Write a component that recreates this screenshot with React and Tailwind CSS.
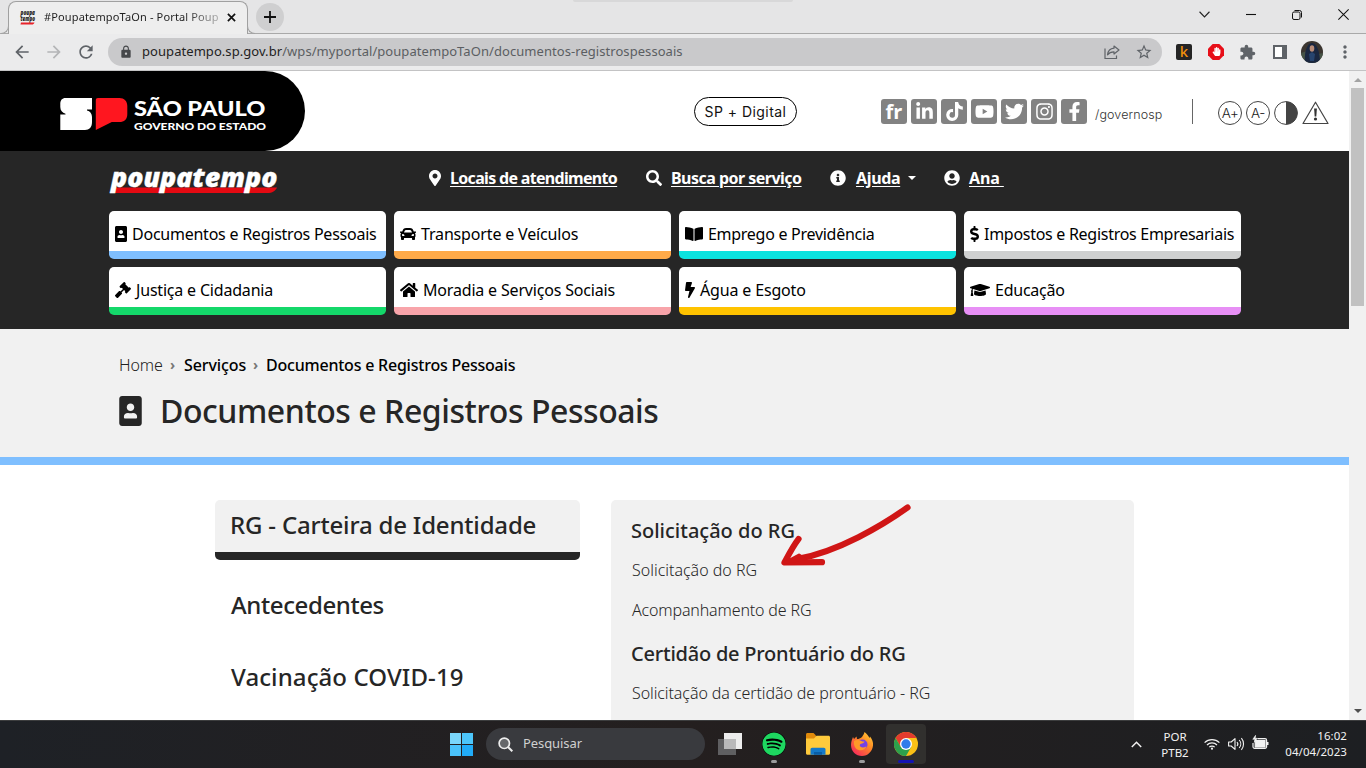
import {
  FaBolt,
  FaBookOpen,
  FaCar,
  FaFacebookF,
  FaGavel,
  FaGraduationCap,
  FaDollarSign,
  FaHandPaper,
  FaHome,
  FaInfoCircle,
  FaInstagram,
  FaLinkedinIn,
  FaMapMarkerAlt,
  FaPortrait,
  FaSearch,
  FaSpotify,
  FaTiktok,
  FaTwitter,
  FaUserCircle,
  FaYoutube,
} from "react-icons/fa";
import {
  MdArrowBack,
  MdArrowForward,
  MdExtension,
  MdLock,
  MdMoreVert,
  MdRefresh,
  MdStarBorder,
} from "react-icons/md";

const categories = [
  { label: "Documentos e Registros Pessoais", icon: FaPortrait, iconClass: "w-3", bar: "border-[#7fbfff]", text: "tracking-[-0.24px] ml-[5px]" },
  { label: "Transporte e Veículos", icon: FaCar, iconClass: "w-4", bar: "border-[#ffaa49]", text: "tracking-[-0.16px] ml-[5px]" },
  { label: "Emprego e Previdência", icon: FaBookOpen, iconClass: "w-[18px]", bar: "border-[#0be3df]", text: "tracking-[-0.28px] ml-[5px]" },
  { label: "Impostos e Registros Empresariais", icon: FaDollarSign, iconClass: "w-[9px]", bar: "border-[#cfd0d0]", text: "tracking-[-0.28px] ml-[5px]" },
  { label: "Justiça e Cidadania", icon: FaGavel, iconClass: "w-4", bar: "border-[#14d86a]", text: "tracking-[-0.19px] ml-[5px]" },
  { label: "Moradia e Serviços Sociais", icon: FaHome, iconClass: "w-[18px]", bar: "border-[#f8a4aa]", text: "tracking-[-0.18px] ml-[5px]" },
  { label: "Água e Esgoto", icon: FaBolt, iconClass: "w-[10px]", bar: "border-[#ffc300]", text: "tracking-[-0.16px] ml-[5px]" },
  { label: "Educação", icon: FaGraduationCap, iconClass: "w-5", bar: "border-[#e78ff5]", text: "tracking-[-0.24px] ml-[5px]" },
];

const socials = [FaLinkedinIn, FaTiktok, FaYoutube, FaTwitter, FaInstagram, FaFacebookF];

function Favicon() {
  return (
    <svg viewBox="0 0 16 16" className="size-4 shrink-0 overflow-visible">
      <g fontFamily="Open Sans" fontWeight="800" fontStyle="italic" fontSize="6.500" fill="#222">
        <text x="0.500" y="6" textLength="14.500" lengthAdjust="spacingAndGlyphs">poupa</text>
        <text x="0.500" y="12" textLength="14.500" lengthAdjust="spacingAndGlyphs">tempo</text>
      </g>
      <path d="M1 13.500h13.500c-.5 1.500-1.500 2-2.500 2H.5z" fill="#e8232a" />
    </svg>
  );
}

function TabStrip() {
  return (
    <div className="flex h-[34px] border-b border-[#a9a9a9] bg-[#e5e5e6]">
      <div className="relative ml-2 mt-px h-[33px] w-[240px] rounded-t-lg border border-b-0 border-[#a0a0a0] bg-[#eeeeee]">
        <span className="absolute -left-2 bottom-0 size-2 rounded-br-lg border-b border-r border-[#a0a0a0] bg-[#e5e5e6]" />
        <span className="absolute -right-2 bottom-0 size-2 rounded-bl-lg border-b border-l border-[#a0a0a0] bg-[#e5e5e6]" />
        <div className="flex h-[30px] items-center pl-[11px]">
          <Favicon />
          <span className="ml-2 w-[175px] overflow-hidden whitespace-nowrap bg-linear-to-r from-[#1f1f1f] from-80% to-[#1f1f1f]/30 bg-clip-text text-[11px] tracking-[0.14px] text-transparent">
            #PoupatempoTaOn - Portal Poup
          </span>
          <svg viewBox="0 0 10 10" className="ml-[8px] size-[9px]" stroke="#111" strokeWidth="1.900">
            <path d="M1 1l8 8M9 1l-8 8" />
          </svg>
        </div>
      </div>
      <div className="ml-[8px] mt-[3px] flex size-[28px] items-center justify-center rounded-full bg-[#cfcfd0]">
        <svg viewBox="0 0 12 12" className="size-3" stroke="#111" strokeWidth="1.800">
          <path d="M6 0v12M0 6h12" />
        </svg>
      </div>
      <div className="ml-[289px] h-[2px] w-[220px] rounded-b bg-[#d8d8d9]" />
      <div className="ml-auto flex h-[29px] items-center pr-[17px]">
        <svg viewBox="0 0 10 6" className="mr-[36px] h-[7px] w-[11px]" fill="none" stroke="#222">
          <path d="M.5.5L5 5.200 9.500.5" />
        </svg>
        <svg viewBox="0 0 10 10" className="mr-[36px] size-[10px]" stroke="#111" strokeWidth="1.100">
          <path d="M0 4.500h10" />
        </svg>
        <svg viewBox="0 0 10 10" className="mr-[36px] size-[10px]" fill="none" stroke="#111">
          <rect x=".5" y="2" width="7.500" height="7.500" rx="1.500" />
          <path d="M2.500.5h5a2 2 0 0 1 2 2v5" />
        </svg>
        <svg viewBox="0 0 10 10" className="size-[11px]" stroke="#111" strokeWidth=".95">
          <path d="M.3.300l9.400 9.400M9.700.300L.3 9.700" />
        </svg>
      </div>
    </div>
  );
}

function Toolbar() {
  return (
    <div className="flex h-[37px] items-center border-b border-[#c3c3c4] bg-[#ebebec] text-[#5f6368]">
      <MdArrowBack className="ml-[12px] size-5" />
      <MdArrowForward className="ml-[12px] size-5 text-[#b4b5b7]" />
      <MdRefresh className="ml-[12px] size-5" />
      <div className="ml-[12px] flex h-7 w-[1054px] items-center rounded-full bg-[#c9c9cb]">
        <MdLock className="ml-[11px] size-[14px] text-[#46484b]" />
        <span className="ml-[9px] whitespace-nowrap text-[13px] tracking-[0.06px] text-[#5b5e62]">
          <span className="text-[#222]">poupatempo.sp.gov.br</span>
          /wps/myportal/poupatempoTaOn/documentos-registrospessoais
        </span>
        <svg viewBox="0 0 16 16" className="ml-auto size-4" fill="none" stroke="#5f6368" strokeWidth="1.200">
          <path d="M1 4.500v10h11.500v-3" />
          <path d="M10 2l5 4-5 4V7.800c-3 0-5 1-6.500 3C4 7 6.500 4.500 10 4.200z" strokeLinejoin="round" />
        </svg>
        <MdStarBorder className="ml-[15px] mr-[9px] size-[18px]" />
      </div>
      <div className="ml-[14px] flex size-4 items-center justify-center rounded-[2px] bg-[#252525] text-[15px] leading-none font-medium text-[#f0900c]">
        <span className="-mt-[2px]">k</span>
      </div>
      <div className="relative ml-4 size-4">
        <svg viewBox="0 0 16 16" className="size-4">
          <path d="M4.700 0h6.600L16 4.700v6.600L11.300 16H4.700L0 11.300V4.700z" fill="#e70f19" />
        </svg>
        <FaHandPaper className="absolute left-[3.5px] top-[3px] size-[9px] text-white" />
      </div>
      <MdExtension className="ml-[15px] size-[17px]" />
      <span className="ml-[17px] h-[14px] w-[14px] border-2 border-r-[5px] border-[#5f6368] bg-white" />
      <svg viewBox="0 0 22 22" className="ml-[14px] size-[22px] rounded-full">
        <rect width="22" height="22" fill="#3b3530" />
        <path d="M0 12l6-2 11 3 5-1v10H0z" fill="#465346" />
        <path d="M4 22C3 11 6 2 11 2s8 9 8 20z" fill="#1a2740" />
        <ellipse cx="11" cy="7.500" rx="2.300" ry="3.200" fill="#b98c78" />
        <path d="M8 13l3-2 3 2-1 7H9z" fill="#27446e" />
      </svg>
      <MdMoreVert className="ml-[12px] size-5" />
    </div>
  );
}

function StateLogo() {
  return (
    <svg viewBox="0 0 210 40" className="h-10 w-[210px] overflow-visible">
      <path d="M5.500 4H32v11.500H27v.9c3.100.7 5 3 5 6.600v5c0 5.300-2.600 8-7 8H.3V20.500h5.200v-.8C2.300 18.800.3 16.500.3 13V10C.3 6.200 2.100 4 5.500 4z" fill="#fff" />
      <path d="M38 4h21.300c5 0 8 3 8 8v8c0 5.500-3 8-8 8h-7.500L35.800 36V6.200C35.800 4.800 36.600 4 38 4z" fill="#ff161f" />
      <text x="74" y="22" fill="#fff" fontFamily="Lato" fontWeight="900" fontSize="20.500" textLength="131.500" lengthAdjust="spacingAndGlyphs">SÃO PAULO</text>
      <text x="74" y="35.700" fill="#fff" fontFamily="Lato" fontWeight="900" fontSize="10.200" textLength="132" lengthAdjust="spacingAndGlyphs">GOVERNO DO ESTADO</text>
    </svg>
  );
}

function PoupatempoLogo() {
  return (
    <svg viewBox="0 0 170 28" className="h-7 w-[170px] overflow-visible">
      <path d="M4 20.500h164c-1.500 3.500-4.500 5.500-10 5.500H2.500z" fill="#e40a12" />
      <text x="2" y="19.500" fontFamily="Open Sans" fontWeight="800" fontStyle="italic" fontSize="26.500" fill="#fff" stroke="#fff" strokeWidth=".4" textLength="166.500" lengthAdjust="spacingAndGlyphs">poupatempo</text>
    </svg>
  );
}

function GovHeader() {
  return (
    <header className="flex h-20 bg-white">
      <div className="flex h-20 w-[305px] items-center rounded-r-full bg-black pl-[60px] pt-[6px]">
        <StateLogo />
      </div>
      <div className="ml-[389px] mt-[26px] flex h-[29px] w-[103px] items-center justify-center rounded-full border border-black pb-px font-['Inter'] text-[14px] tracking-[0.45px] text-[#111]">
        SP + Digital
      </div>
      <div className="ml-[84px] mt-[28px] flex h-[25px] gap-1">
        <span className="flex h-[25px] w-[26px] items-center justify-center rounded-[3px] bg-[#828282] font-['Open_Sans'] text-[20px] leading-6 font-bold text-white">
          fr
        </span>
        {socials.map((Icon, i) => (
          <span key={i} className="flex h-[25px] w-[26px] items-center justify-center rounded-[3px] bg-[#828282] text-white">
            <Icon className="size-[19px]" />
          </span>
        ))}
      </div>
      <span className="ml-[8px] mt-[34px] w-[68px] font-['Inter'] text-[12.5px] leading-5 font-light tracking-[0.1px] text-[#333]">/governosp</span>
      <span className="ml-[29px] mt-[28px] h-[25px] w-px bg-[#666]" />
      <div className="ml-[25px] mt-[30px] flex gap-1">
        {["A+", "A-"].map((t) => (
          <span key={t} className="flex size-6 items-center justify-center rounded-full border border-[#444] pb-px font-['Inter'] text-[13.5px] leading-5 font-light tracking-[-0.4px] text-[#222]">
            {t}
          </span>
        ))}
        <svg viewBox="0 0 24 24" className="size-6">
          <circle cx="12" cy="12" r="11.400" fill="#fff" stroke="#444" />
          <path d="M12 .6a11.400 11.400 0 0 1 0 22.800z" fill="#444" />
        </svg>
        <svg viewBox="0 0 27 24" className="h-6 w-[27px]">
          <path d="M13.500 1.200L26 22.500H1z" fill="none" stroke="#444" strokeWidth="1.200" strokeLinejoin="round" />
          <path d="M12.100 7.500h2.800l-.6 8h-1.600z" fill="#333" />
          <circle cx="13.500" cy="18" r="1.600" fill="#333" />
        </svg>
      </div>
    </header>
  );
}

function MainNav() {
  return (
    <nav className="h-[178px] bg-[#262626] pl-[109px]">
      <div className="flex h-[60px]">
        <div className="w-[320px] pt-[16px]">
          <PoupatempoLogo />
        </div>
        <div className="mt-[15px] flex h-6 items-center text-[16px] leading-6 font-bold whitespace-nowrap text-white">
          <div className="flex w-[217px] items-center">
            <FaMapMarkerAlt className="h-4 w-3" />
            <a className="ml-[9px] tracking-[-0.68px] underline underline-offset-2">Locais de atendimento</a>
          </div>
          <div className="flex w-[184px] items-center">
            <FaSearch className="size-4" />
            <a className="ml-[9px] tracking-[-0.52px] underline underline-offset-2">Busca por serviço</a>
          </div>
          <div className="flex w-[114px] items-center">
            <FaInfoCircle className="size-4" />
            <a className="ml-[10px] tracking-[-0.35px] underline underline-offset-2">Ajuda</a>
            <span className="ml-[8px] border-x-4 border-t-4 border-x-transparent border-t-white" />
          </div>
          <div className="flex items-center">
            <FaUserCircle className="size-4" />
            <a className="ml-[9px] tracking-[-0.1px] whitespace-pre underline underline-offset-2">{"Ana "}</a>
          </div>
        </div>
      </div>
      <div className="grid w-[1132px] grid-cols-4 gap-2">
        {categories.map(({ label, icon: Icon, iconClass, bar, text }) => (
          <a key={label} className={`flex h-12 rounded-[5px] border-b-8 bg-white pl-[6px] pt-[11px] text-[16px] leading-6 whitespace-nowrap text-black ${bar}`}>
            <Icon className={`mt-1 h-4 shrink-0 ${iconClass}`} />
            <span className={text}>{label}</span>
          </a>
        ))}
      </div>
    </nav>
  );
}

function PageTitle() {
  return (
    <section className="h-[136px] border-b-8 border-[#7fbfff] bg-[#f1f1f1] pl-[119px] pt-[24px]">
      <div className="flex h-6 text-[16px] leading-6 whitespace-nowrap text-black">
        <span className="w-[51px] font-light tracking-[-0.1px] text-[#222]">Home</span>
        <span className="w-[14px] text-[14px] font-bold text-[#777]">›</span>
        <span className="w-[69px] font-medium tracking-[-0.1px]">Serviços</span>
        <span className="w-[13px] text-[14px] font-bold text-[#777]">›</span>
        <span className="font-medium tracking-[-0.22px]">Documentos e Registros Pessoais</span>
      </div>
      <div className="mt-[14px] flex h-10">
        <FaPortrait className="mt-[5px] h-[30px] w-[23px] text-[#262626]" />
        <h1 className="ml-[18px] text-[32px] leading-10 font-medium tracking-[-0.44px] whitespace-nowrap text-[#262626]">
          Documentos e Registros Pessoais
        </h1>
      </div>
    </section>
  );
}

function Arrow() {
  return (
    <svg viewBox="0 0 132 68" className="absolute left-[168px] top-[4px] h-[68px] w-[132px]" fill="none" stroke="#d01616" strokeWidth="6.200" strokeLinecap="round" strokeLinejoin="round">
      <path d="M128.500 3.500C104 21 59 48 18 55" />
      <path d="M19.500 35C13.500 43 9.500 51 5.500 58.500l37.500-.3" />
      <path d="M7 58L20 51l6 4z" fill="#d01616" strokeWidth="3" />
    </svg>
  );
}

function Services() {
  return (
    <main className="flex h-[255px] overflow-hidden bg-white pl-[215px] pt-[35px] text-[#262626]">
      <div className="w-[365px] text-[24px] leading-8 font-medium whitespace-nowrap">
        <div className="h-[60px] rounded-[5px] border-b-8 border-[#262626] bg-[#f1f1f1] pl-[15px] pt-[9px] tracking-[-0.18px]">RG - Carteira de Identidade</div>
        <div className="mt-[29px] h-[72px] pl-4 tracking-[-0.4px]">Antecedentes</div>
        <div className="pl-4 tracking-[0.1px]">Vacinação COVID-19</div>
      </div>
      <div className="relative ml-[31px] h-[300px] w-[523px] rounded-[5px] bg-[#f1f1f1] pl-[20px] pt-[19px] text-[16px] font-light whitespace-nowrap">
        <h2 className="h-[39px] text-[20px] leading-6 font-medium">Solicitação do RG</h2>
        <p className="h-10 pl-px leading-6">Solicitação do RG</p>
        <p className="h-11 pl-px leading-6 tracking-[-0.15px]">Acompanhamento de RG</p>
        <h2 className="h-[39px] text-[20px] leading-6 font-medium tracking-[-0.23px]">Certidão de Prontuário do RG</h2>
        <p className="pl-px leading-6 tracking-[-0.08px]">Solicitação da certidão de prontuário - RG</p>
        <Arrow />
      </div>
    </main>
  );
}

function Scrollbar() {
  return (
    <div className="flex w-[17px] flex-col items-center bg-[#f1f1f1]">
      <span className="mt-[7px] border-x-4 border-b-4 border-x-transparent border-b-[#a3a3a3]" />
      <span className="mt-[6px] h-[218px] w-[13px] bg-[#c1c1c1]" />
      <span className="mt-auto mb-[7px] border-x-4 border-t-4 border-x-transparent border-t-[#505050]" />
    </div>
  );
}

function ChromeIcon() {
  return (
    <svg viewBox="0 0 24 24" className="size-6">
      <circle cx="12" cy="12" r="12" fill="#fbc116" />
      <path d="M1.600 6A12 12 0 0 1 22.400 6H12L6.800 15z" fill="#e33b2e" />
      <path d="M1.600 6A12 12 0 0 0 12 24l5.200-9-5.200 1-5.200-1z" fill="#2da14c" />
      <circle cx="12" cy="12" r="6" fill="#fff" />
      <circle cx="12" cy="12" r="4.700" fill="#2f7bea" />
    </svg>
  );
}

function FirefoxIcon() {
  return (
    <svg viewBox="0 0 24 24" className="size-6">
      <defs>
        <linearGradient id="fox" x1="1" y1="0" x2="0.200" y2="1">
          <stop offset="0" stopColor="#ffd83a" />
          <stop offset="0.450" stopColor="#ff8a24" />
          <stop offset="1" stopColor="#f5275d" />
        </linearGradient>
      </defs>
      <path d="M3 5l1 2 2.500-2.500L7 7c2 0 3-.5 5-2 1-1.500 2-3 2.500-5 2.500 2 4 4 5 6l.5-1.500c2 2.500 3.500 5.500 3 9C22.500 19 18 24 12 24S1 19.500 1 13c0-3 1-5.500 2-8z" fill="url(#fox)" />
      <circle cx="12.500" cy="12.500" r="5" fill="#7542e5" />
      <path d="M4 9c2-1.500 5-1.500 7.500 0 1 .7 2 .6 3 .5-.5 1.500-2 2-3.500 2.200-1.500.5-1.500 2-.5 3 1.500 1.300 4 1 6-.5-1 3.500-5 5-8.500 3.500C5 16.500 3.500 13 4 9z" fill="#ff9a28" />
    </svg>
  );
}

function FolderIcon() {
  return (
    <svg viewBox="0 0 24 22" className="h-[22px] w-6">
      <path d="M0 1.500C0 .6.600 0 1.500 0h6L10 2.500V8H0z" fill="#e08a0b" />
      <path d="M0 5.500h8l2.500-2.700h12c.9 0 1.500.6 1.500 1.500v16c0 .9-.6 1.500-1.500 1.500h-21C.6 21.800 0 21.200 0 20.300z" fill="#ffca3c" />
      <path d="M4.500 21.800V16.500c0-1 .6-1.700 1.600-1.700h11.800c1 0 1.600.7 1.600 1.700v5.300z" fill="#1479c9" />
      <path d="M8 19h8v2.800H8z" fill="#0a5ea6" />
    </svg>
  );
}

function Taskbar() {
  return (
    <footer className="flex h-12 border-t border-[#3c3d3e] bg-linear-to-r from-[#1e2126] via-[#241f1f] to-[#1d1f22] text-[#f2f2f2]">
      <div className="ml-[450px] mt-[12px] grid size-[23px] grid-cols-2 gap-px">
        <span className="bg-[#7ad6fb]" />
        <span className="bg-[#4cc6fb]" />
        <span className="bg-[#4ac2fa]" />
        <span className="bg-[#21acf8]" />
      </div>
      <div className="ml-[13px] mt-[7px] flex h-8 w-[219px] items-center rounded-full bg-[#393a3e]">
        <svg viewBox="0 0 15 15" className="ml-[12px] size-[15px]" fill="#66686b" stroke="#ededed" strokeWidth="1.700">
          <circle cx="6.300" cy="6.300" r="5.200" />
          <path d="M10 10l4.300 4.300" strokeWidth="2" />
        </svg>
        <span className="ml-[10px] text-[13px] tracking-[-0.08px] text-[#d0d0d0]">Pesquisar</span>
      </div>
      <svg viewBox="0 0 24 22" className="ml-[13px] mt-[12px] h-[22px] w-6">
        <rect x="0" y="6" width="18" height="16" fill="#5f5f61" />
        <rect x="6" y="0" width="18" height="16" fill="#ededed" />
        <rect x="6" y="6" width="12" height="10" fill="#b9b9ba" />
      </svg>
      <div className="ml-5 mt-[11px] flex w-6 flex-col items-center">
        <FaSpotify className="size-6 rounded-full bg-black text-[#1ed760]" />
        <span className="mt-[4px] h-[3px] w-[6px] rounded-full bg-[#9c9c9d]" />
      </div>
      <div className="ml-5 mt-[12px]">
        <FolderIcon />
      </div>
      <div className="ml-5 mt-[11px] flex w-6 flex-col items-center">
        <FirefoxIcon />
        <span className="mt-[4px] h-[3px] w-[6px] rounded-full bg-[#9c9c9d]" />
      </div>
      <div className="ml-3 mt-[3px] flex h-10 w-10 flex-col items-center rounded bg-[#31302e] pt-[8px]">
        <ChromeIcon />
        <span className="mt-[4px] h-[3px] w-4 rounded-full bg-[#1414b4]" />
      </div>
      <svg viewBox="0 0 11 7" className="ml-auto mt-[20px] h-[7px] w-[11px]" fill="none" stroke="#f2f2f2" strokeWidth="1.500">
        <path d="M.8 6l4.700-4.700L10.200 6" />
      </svg>
      <div className="ml-[18px] mt-[8px] w-[30px] text-center text-[11.5px] leading-4">
        <div>POR</div>
        <div>PTB2</div>
      </div>
      <svg viewBox="0 0 16 12" className="ml-[14px] mt-[17px] h-3 w-4" fill="none" stroke="#f2f2f2" strokeWidth="1.200">
        <path d="M.6 4.600a10.500 10.500 0 0 1 14.800 0" />
        <path d="M3 7a7.100 7.100 0 0 1 10 0" />
        <path d="M5.300 9.200a3.800 3.800 0 0 1 5.400 0" />
        <circle cx="8" cy="10.700" r="1.100" fill="#f2f2f2" stroke="none" />
      </svg>
      <svg viewBox="0 0 17 14" className="ml-2 mt-[16px] h-[14px] w-[17px]" fill="none" stroke="#f2f2f2" strokeWidth="1.100">
        <path d="M.6 5v4h2.600L7 12.400V1.600L3.200 5z" strokeLinejoin="round" />
        <path d="M9 5a3 3 0 0 1 0 4M11.200 3a6 6 0 0 1 0 8M13.400 1.200a9 9 0 0 1 0 11.600" />
      </svg>
      <svg viewBox="0 0 17 14" className="ml-[7px] mt-[14px] h-[14px] w-[17px]" fill="none" stroke="#f2f2f2" strokeWidth="1.200">
        <rect x="3.200" y="5.500" width="9.800" height="6.500" fill="#f2f2f2" />
        <path d="M5.500 3.600H13a1.600 1.600 0 0 1 1.600 1.600v6.600a1.600 1.600 0 0 1-1.600 1.600H2.600A1.600 1.600 0 0 1 1 11.800V8" />
        <path d="M15.600 7v3" strokeWidth="1.800" />
        <path d="M3.600.3L.8 4.300h2.200l-.7 3 3-4H3.200z" fill="#f2f2f2" strokeWidth=".6" />
      </svg>
      <div className="ml-[8px] mt-[7px] mr-[19px] w-[70px] text-right text-[11.5px] leading-4 tracking-[0.05px]">
        <div>16:02</div>
        <div>04/04/2023</div>
      </div>
    </footer>
  );
}

export default function App() {
  return (
    <div className="flex h-[768px] w-[1366px] flex-col overflow-hidden font-['Noto_Sans',sans-serif]">
      <TabStrip />
      <Toolbar />
      <div className="flex h-[649px] overflow-hidden">
        <div className="w-[1349px]">
          <GovHeader />
          <MainNav />
          <PageTitle />
          <Services />
        </div>
        <Scrollbar />
      </div>
      <Taskbar />
    </div>
  );
}
